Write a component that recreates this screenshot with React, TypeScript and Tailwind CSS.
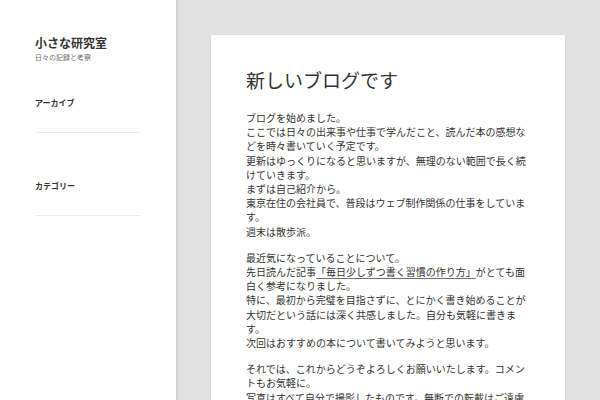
const jp = { fontFamily: '"Noto Sans CJK JP", "Noto Sans", sans-serif' }

function Widget({ title, first }: { title: string; first?: boolean }) {
  return (
    <section className={`${first ? 'mt-[35px]' : 'mt-[47px]'} border-b border-[#eaeaea] pb-[23px]`}>
      <h2 className="text-[8px] font-bold leading-[12px] text-[#333]">{title}</h2>
    </section>
  )
}

export default function App() {
  return (
    <div className="flex min-h-[400px] bg-[#e1e1e1] text-[#333]" style={jp}>
      <aside className="w-[176px] shrink-0 bg-white px-[35px] pt-[34px] shadow-[1px_0_2px_rgba(0,0,0,0.12)]">
        <h1 className="text-[12px] font-bold leading-[17px]">小さな研究室</h1>
        <p className="mt-[1px] text-[7px] leading-[10px] text-[#707070]">日々の記録と考察</p>
        <Widget title="アーカイブ" first />
        <Widget title="カテゴリー" />
      </aside>

      <main className="flex-1 px-[35px] pt-[35px]">
        <article className="bg-white px-[35px] pt-[33px] pb-[40px] shadow-[0_0_1px_rgba(0,0,0,0.15)]">
          <h1 className="text-[19px] leading-[24px]">新しいブログです</h1>

          <div className="mt-[19px] text-[10px] leading-[14.2px]">
            <p>
              ブログを始めました。
              <br />
              ここでは日々の出来事や仕事で学んだこと、読んだ本の感想などを時々書いていく予定です。
              <br />
              更新はゆっくりになると思いますが、無理のない範囲で長く続けていきます。
              <br />
              まずは自己紹介から。
              <br />
              東京在住の会社員で、普段はウェブ制作関係の仕事をしています。
              <br />
              週末は散歩派。
            </p>

            <p className="mt-[12px]">
              最近気になっていることについて。
              <br />
              先日読んだ記事
              <a href="#" className="underline decoration-[#707070] underline-offset-2">
                「毎日少しずつ書く習慣の作り方」
              </a>
              がとても面白く参考になりました。
              <br />
              特に、最初から完璧を目指さずに、とにかく書き始めることが大切だという話には深く共感しました。自分も気軽に書きます。
              <br />
              次回はおすすめの本について書いてみようと思います。
            </p>

            <p className="mt-[12px]">
              それでは、これからどうぞよろしくお願いいたします。コメントもお気軽に。
              <br />
              写真はすべて自分で撮影したものです。無断での転載はご遠慮ください。
            </p>
          </div>
        </article>
      </main>
    </div>
  )
}
